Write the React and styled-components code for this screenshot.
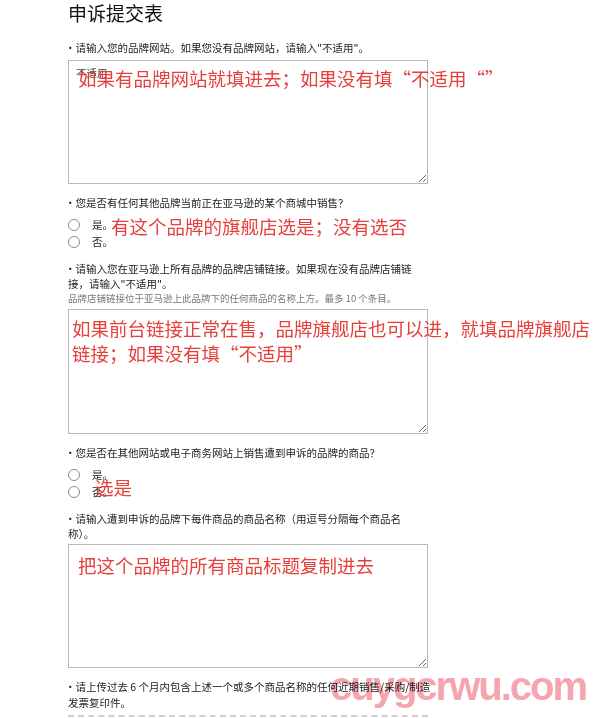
import styled, { createGlobalStyle } from "styled-components";

const GlobalStyle = createGlobalStyle`
  body {
    margin: 0;
    background: #ffffff;
    font-family: "Noto Sans CJK SC", "Noto Sans", sans-serif;
  }
`;

const Page = styled.div`
  position: relative;
  width: 602px;
  height: 718px;
  overflow: hidden;
  padding-left: 68px;
  box-sizing: border-box;
  color: #222;
`;

const Title = styled.h1`
  margin: 0;
  font-size: 19px;
  font-weight: 400;
  line-height: 26px;
  color: #111;
`;

const Label = styled.div`
  margin-top: ${(p) => p.$mt || 11}px;
  font-size: 10.5px;
  line-height: ${(p) => p.$lh || 15}px;
  white-space: nowrap;
  color: #222;
`;

const Dot = styled.span`
  margin-left: -3px;
`;

const Hint = styled.div`
  font-size: 9.5px;
  line-height: 15px;
  color: #777;
  white-space: nowrap;
`;

const Field = styled.div`
  position: relative;
  width: 360px;
  margin-top: ${(p) => p.$mt || 3}px;
`;

const TextArea = styled.textarea`
  display: block;
  width: 360px;
  height: ${(p) => p.$h}px;
  box-sizing: border-box;
  border: 1px solid #b9b9b9;
  border-radius: 0;
  padding: 4px 7px;
  margin: 0;
  resize: vertical;
  font-family: "Noto Sans CJK SC", sans-serif;
  font-size: 10.5px;
  line-height: 15px;
  color: #444;
  background: #fff;
  outline: none;
`;

const Note = styled.div`
  position: absolute;
  left: ${(p) => p.$x}px;
  top: ${(p) => p.$y}px;
  font-size: 18.5px;
  line-height: 25px;
  color: #e5403b;
  white-space: nowrap;
  pointer-events: none;
`;

const RadioList = styled.div`
  position: relative;
  margin-top: 6px;
`;

const RadioRow = styled.label`
  display: flex;
  align-items: center;
  gap: 12px;
  height: 17px;
  font-size: 10.5px;
  color: #222;
`;

const Radio = styled.input.attrs({ type: "radio" })`
  appearance: none;
  width: 12px;
  height: 12px;
  margin: 0;
  border: 1px solid #8c8c8c;
  border-radius: 50%;
  background: #fff;
`;

const Upload = styled.div`
  width: 360px;
  margin-top: 5px;
  height: 20px;
  border-top: 2px dashed #d0d0d0;
`;

const Watermark = styled.div`
  position: absolute;
  left: 330px;
  top: 666px;
  font-family: "Liberation Sans", Arial, sans-serif;
  font-weight: 700;
  font-size: 40px;
  line-height: 40px;
  letter-spacing: -2px;
  color: #f5a5ad;
  mix-blend-mode: multiply;
  pointer-events: none;
`;

export default function App() {
  return (
    <Page>
      <GlobalStyle />
      <Title>申诉提交表</Title>

      <Label $mt={14}>
        <Dot>•</Dot>请输入您的品牌网站。如果您没有品牌网站，请输入"不适用"。
      </Label>
      <Field $mt={5}>
        <TextArea $h={124} defaultValue="不适用" />
        <Note $x={10} $y={6}>如果有品牌网站就填进去；如果没有填“不适用“”</Note>
      </Field>

      <Label>
        <Dot>•</Dot>您是否有任何其他品牌当前正在亚马逊的某个商城中销售？
      </Label>
      <RadioList>
        <RadioRow>
          <Radio name="other" />
          是。
        </RadioRow>
        <RadioRow>
          <Radio name="other" />
          否。
        </RadioRow>
        <Note $x={43} $y={-2}>有这个品牌的旗舰店选是；没有选否</Note>
      </RadioList>

      <Label>
        <Dot>•</Dot>请输入您在亚马逊上所有品牌的品牌店铺链接。如果现在没有品牌店铺链
        <br />
        接，请输入"不适用"。
      </Label>
      <Hint>品牌店铺链接位于亚马逊上此品牌下的任何商品的名称上方。最多 10 个条目。</Hint>
      <Field>
        <TextArea $h={125} />
        <Note $x={4} $y={7}>
          如果前台链接正常在售，品牌旗舰店也可以进，就填品牌旗舰店
          <br />
          链接；如果没有填“不适用”
        </Note>
      </Field>

      <Label>
        <Dot>•</Dot>您是否在其他网站或电子商务网站上销售遭到申诉的品牌的商品？
      </Label>
      <RadioList>
        <RadioRow>
          <Radio name="elsewhere" />
          是。
        </RadioRow>
        <RadioRow>
          <Radio name="elsewhere" />
          否。
        </RadioRow>
        <Note $x={27} $y={9}>选是</Note>
      </RadioList>

      <Label>
        <Dot>•</Dot>请输入遭到申诉的品牌下每件商品的商品名称（用逗号分隔每个商品名
        <br />
        称）。
      </Label>
      <Field>
        <TextArea $h={124} />
        <Note $x={10} $y={9}>把这个品牌的所有商品标题复制进去</Note>
      </Field>

      <Label $lh={15.5}>
        <Dot>•</Dot>请上传过去 6 个月内包含上述一个或多个商品名称的任何近期销售/采购/制造
        <br />
        发票复印件。
      </Label>
      <Upload />

      <Watermark>cuygcrwu.com</Watermark>
    </Page>
  );
}
